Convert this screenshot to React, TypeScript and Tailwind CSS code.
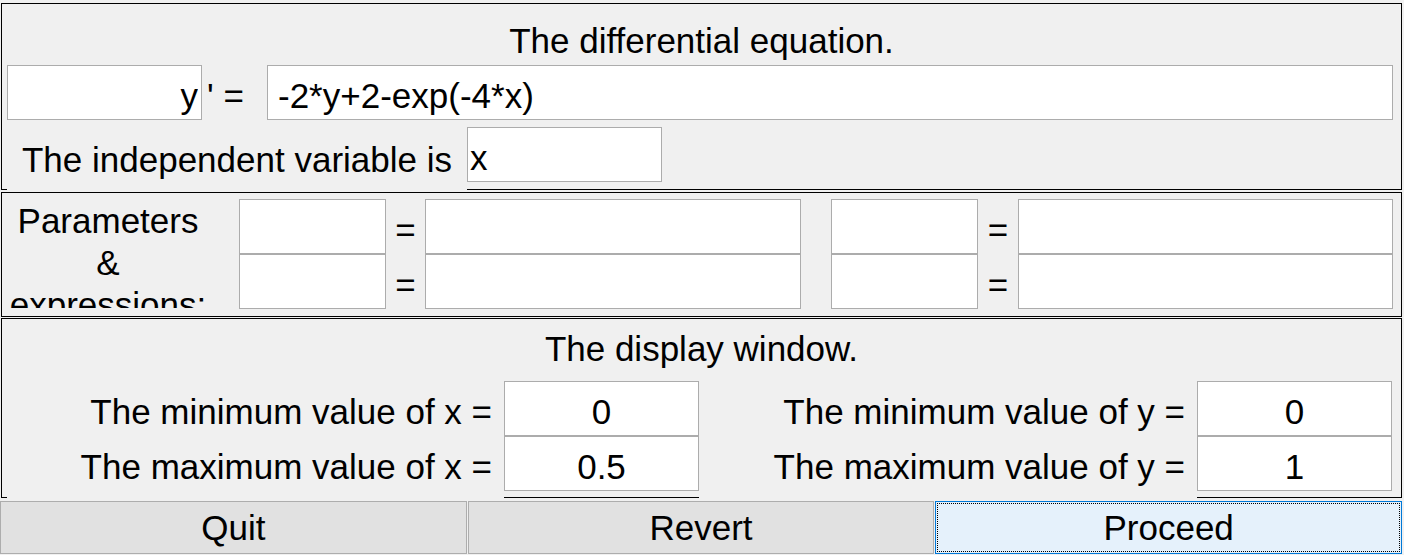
import { useState } from "react";

const FIELD =
  "block h-[55px] min-w-0 border border-[#acacac] bg-white pt-[10px] pb-[4px] leading-[40px] outline-none";

const PARAM_ROWS = [0, 1];

const WINDOW_ROWS = [
  { xLabel: "The minimum value of x =", x: "0", yLabel: "The minimum value of y =", y: "0" },
  { xLabel: "The maximum value of x =", x: "0.5", yLabel: "The maximum value of y =", y: "1" },
];

function Field({ value, className = "" }: { value?: string; className?: string }) {
  const [v, setV] = useState(value ?? "");
  return (
    <input
      type="text"
      value={v}
      onChange={(e) => setV(e.target.value)}
      className={`${FIELD} ${className}`}
    />
  );
}

function EquationPanel() {
  return (
    <section className="ml-[1px] w-[1401px] border-x border-t border-black">
      <h2 className="pt-[17px] text-center leading-[40px]">The differential equation.</h2>
      <div className="mt-[4px] flex pl-[5px] pr-[8px]">
        <Field value="y" className="w-[195px] pr-[3px] text-right" />
        <span className="w-[65px] pl-[5px] pt-[11px] leading-[40px]">' =</span>
        <Field value="-2*y+2-exp(-4*x)" className="flex-1 pl-[10px]" />
      </div>
      {/* the label hides the panel's bottom edge, so the edge is drawn per piece */}
      <div className="flex h-[70px]">
        <div className="w-[5px] border-b border-black" />
        <span className="w-[460px] pt-[20px] text-center leading-[40px]">The independent variable is</span>
        <div className="w-[195px] border-b border-black pt-[7px]">
          <Field value="x" className="w-full pl-[2px]" />
        </div>
        <div className="flex-1 border-b border-black" />
      </div>
    </section>
  );
}

function ParametersPanel() {
  return (
    <section className="mt-[2px] ml-[1px] flex w-[1401px] items-start border border-black pt-[6px] pr-[8px] pb-[7px]">
      <div className="mt-[1px] h-[108px] w-[212px] overflow-hidden text-center leading-[42px]">
        Parameters
        <br />&amp;
        <br />
        expressions:
      </div>
      <div className="ml-[25px] grid grid-cols-[147px_39px_376px_30px_147px_40px_375px]">
        {PARAM_ROWS.map((row) => (
          <div key={row} className="contents">
            <Field className="w-full" />
            <span className="pt-[11px] text-center leading-[40px]">=</span>
            <Field className="w-full" />
            <span />
            <Field className="w-full" />
            <span className="pt-[11px] text-center leading-[40px]">=</span>
            <Field className="w-full" />
          </div>
        ))}
      </div>
    </section>
  );
}

function WindowPanel() {
  return (
    <section className="mt-[1px] ml-[1px] w-[1401px] border-x border-t border-black">
      <h2 className="pt-[10px] text-center leading-[40px]">The display window.</h2>
      <div className="flex">
        <div className="w-[5px] border-b border-black" />
        <div className="w-[497px] pt-[12px] pr-[12px] text-right">
          {WINDOW_ROWS.map((r) => (
            <div key={r.xLabel} className="h-[55px] pt-[11px] leading-[40px]">
              {r.xLabel}
            </div>
          ))}
        </div>
        <div className="w-[195px] border-b border-black pt-[12px] pb-[6px]">
          {WINDOW_ROWS.map((r) => (
            <Field key={r.xLabel} value={r.x} className="w-full text-center" />
          ))}
        </div>
        <div className="w-[498px] pt-[12px] pr-[12px] text-right">
          {WINDOW_ROWS.map((r) => (
            <div key={r.yLabel} className="h-[55px] pt-[11px] leading-[40px]">
              {r.yLabel}
            </div>
          ))}
        </div>
        <div className="w-[195px] border-b border-black pt-[12px] pb-[6px]">
          {WINDOW_ROWS.map((r) => (
            <Field key={r.yLabel} value={r.y} className="w-full text-center" />
          ))}
        </div>
        <div className="flex-1 border-b border-black" />
      </div>
    </section>
  );
}

export default function App() {
  return (
    <div className="h-[555px] w-[1404px] overflow-hidden bg-[#f0f0f0] pt-[3px] font-['Liberation_Sans',Arial,sans-serif] text-[35px] text-black">
      <EquationPanel />
      <ParametersPanel />
      <WindowPanel />
      <div className="mt-[3px] grid h-[53px] w-[1402px] grid-cols-3 gap-[1px]">
        <button type="button" className="border border-[#adadad] bg-[#e1e1e1] leading-[40px]">
          Quit
        </button>
        <button type="button" className="border border-[#adadad] bg-[#e1e1e1] leading-[40px]">
          Revert
        </button>
        <button
          type="button"
          className="border border-[#0078d7] bg-[#e5f1fb] leading-[40px] outline-1 outline-offset-[-3px] outline-black outline-dotted"
        >
          Proceed
        </button>
      </div>
    </div>
  );
}
